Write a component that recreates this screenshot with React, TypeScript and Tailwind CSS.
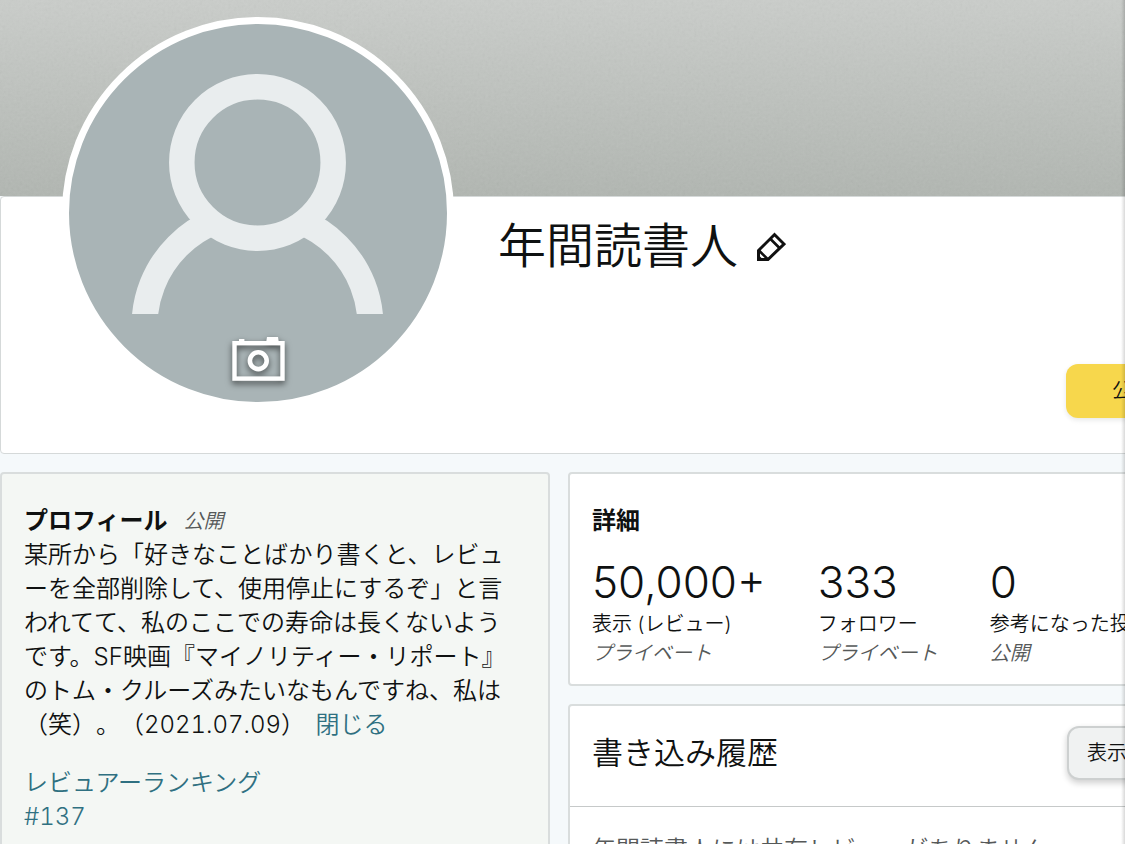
const stats = [
  { value: "50,000+", label: "表示 (レビュー)", visibility: "プライベート" },
  { value: "333", label: "フォロワー", visibility: "プライベート" },
  { value: "0", label: "参考になった投票", visibility: "公開" },
];

function Banner() {
  return (
    <div className="relative h-[196px] bg-linear-to-b from-[#cacdca] to-[#b1b6b1]">
      <svg className="absolute inset-0 h-full w-full opacity-10" aria-hidden="true">
        <filter id="grain">
          <feTurbulence type="fractalNoise" baseFrequency="0.35" numOctaves="3" />
          <feColorMatrix type="saturate" values="0" />
        </filter>
        <rect width="100%" height="100%" filter="url(#grain)" />
      </svg>
    </div>
  );
}

function CameraIcon() {
  return (
    <svg
      width="54"
      height="45"
      viewBox="0 0 54 45"
      fill="none"
      className="overflow-visible drop-shadow-[0_3px_3px_rgba(0,0,0,0.6)]"
      aria-hidden="true"
    >
      <rect x="2.5" y="6.2" width="48" height="35.4" stroke="#fff" strokeWidth="4.4" />
      <path d="M34.2 5 35 0h11l.8 5ZM7 5V2h5.4v3Z" fill="#fff" />
      <circle cx="26.3" cy="23.7" r="8.4" stroke="#fff" strokeWidth="4.6" />
    </svg>
  );
}

function PencilIcon() {
  return (
    <svg width="30" height="30" viewBox="0 0 30 30" fill="none" aria-hidden="true">
      <path
        d="M2.5 18.5 18.5 2.5 28 12 12 27.5H2.5Z"
        stroke="#111"
        strokeWidth="3"
      />
      <path d="M14 6.5 23.5 16M3 18.5 12 27.5" stroke="#111" strokeWidth="2.6" />
      <path d="M2 22.5 7.5 28H2Z" fill="#111" />
    </svg>
  );
}

function Avatar() {
  return (
    <div className="relative -mt-[180px] ml-[61px] size-[392px] shrink-0 rounded-full border-[7px] border-white bg-[#a9b4b6]">
      <svg viewBox="0 0 378 378" fill="none" className="size-full" aria-hidden="true">
        <clipPath id="shoulders">
          <rect width="378" height="290" />
        </clipPath>
        <circle
          cx="188.5"
          cy="302"
          r="113"
          stroke="#e9edee"
          strokeWidth="26"
          clipPath="url(#shoulders)"
        />
        <circle cx="188.5" cy="138.5" r="75.7" fill="#a9b4b6" stroke="#e9edee" strokeWidth="25.5" />
      </svg>
      <button aria-label="写真を変更" className="absolute bottom-5 left-[163px]">
        <CameraIcon />
      </button>
    </div>
  );
}

export default function App() {
  return (
    <div
      lang="ja"
      className="relative min-h-screen overflow-hidden bg-[#f5f9fb] font-['Inter','Noto_Sans_CJK_JP',sans-serif] text-2xl/[34px] font-[350] text-[#0f1111] [text-spacing-trim:space-all]"
    >
      <div className="-mr-[98px]">
        <Banner />

        <header className="flex rounded border border-[#d5d9d9] bg-white pb-11">
          <Avatar />
          <div className="ml-11 flex flex-1 items-start gap-[18px] pt-5">
            <h1 className="text-5xl/[58px]">年間読書人</h1>
            <button aria-label="名前を編集" className="mt-[15px]">
              <PencilIcon />
            </button>
          </div>
          <button className="mr-6 mb-[-9px] h-[54px] w-[132px] self-end rounded-xl bg-[#f7d74c] text-xl shadow-[0_2px_5px_rgba(213,217,217,0.6)]">
            公開
          </button>
        </header>

        <div className="mt-[18px] flex gap-[18px]">
          <section className="w-[550px] shrink-0 rounded border-2 border-[#d9dddd] bg-[#f4f7f4] pt-[30px] pr-8 pb-8 pl-[22px] tabular-nums">
            <div className="flex items-center gap-4">
              <h2 className="font-bold">プロフィール</h2>
              <span className="text-xl/[34px] text-[#565959] italic">公開</span>
            </div>
            <p>
              某所から「好きなことばかり書くと、レビューを全部削除して、使用停止にするぞ」と言われてて、私のここでの寿命は長くないようです。SF映画『マイノリティー・リポート』のトム・クルーズみたいなもんですね、私は（笑）。（2021.07.09）{" "}
              <a href="#" className="ml-1 text-[#2f7081]">
                閉じる
              </a>
            </p>
            <a href="#" className="mt-6 block text-[#2f7081]">
              レビュアーランキング
              <br />
              #137
            </a>
          </section>

          <div className="flex min-w-0 flex-1 flex-col gap-[18px]">
            <section className="rounded border-2 border-[#d9dddd] bg-white px-[22px] pt-[30px] pb-4">
              <h2 className="font-bold">詳細</h2>
              <ul className="mt-5 flex gap-[52px] text-xl/[29px] whitespace-nowrap">
                {stats.map((s) => (
                  <li key={s.label}>
                    <p className="mb-1 text-[44px]/[48px]">{s.value}</p>
                    <p>{s.label}</p>
                    <p className="text-[#565959] italic">{s.visibility}</p>
                  </li>
                ))}
              </ul>
            </section>

            <section className="flex-1 rounded border-2 border-[#d9dddd] bg-white">
              <div className="flex items-center justify-between border-b border-[#c6c9c9] px-[22px] pt-5 pb-[26px]">
                <h2 className="text-[31px]/[54px]">書き込み履歴</h2>
                <button className="h-[54px] w-[132px] rounded-xl border-2 border-[#cdd0d0] bg-[#f0f2f2] px-[18px] text-left text-xl shadow-[0_3px_6px_rgba(15,17,17,0.2)]">
                  表示
                </button>
              </div>
              <p className="px-[22px] py-[26px] text-[#565959]">
                年間読書人には共有レビューがありません
              </p>
            </section>
          </div>
        </div>
      </div>
      <div className="absolute inset-y-0 right-0 w-1 bg-linear-to-r from-transparent to-black/15" />
    </div>
  );
}
